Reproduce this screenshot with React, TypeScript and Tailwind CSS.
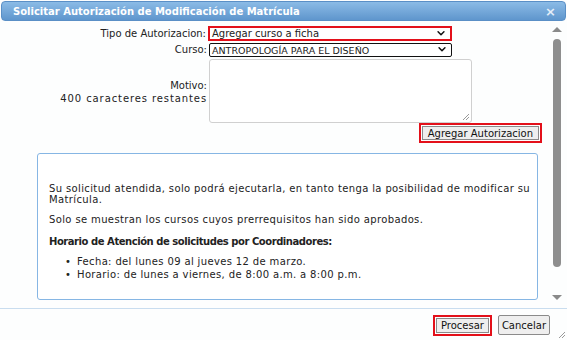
import React from "react";

function Chevron() {
  return (
    <svg viewBox="0 0 9 6" className="h-[5px] w-[8px]" fill="none" stroke="#111" strokeWidth={1.8} strokeLinecap="round" strokeLinejoin="round">
      <path d="M1 1l3.5 3.5L8 1" />
    </svg>
  );
}

function Grip() {
  return (
    <svg viewBox="0 0 8 8" className="h-[8px] w-[8px]" fill="none" stroke="#9a9a9a" strokeWidth={1}>
      <path d="M1 7L7 1M4 7L7 4" />
    </svg>
  );
}

export default function App() {
  return (
    <div className="flex h-[340px] w-[567px] flex-col overflow-hidden bg-[#fdfefe] font-['DejaVu_Sans',sans-serif] text-[10px] text-[#222]">
      {/* title bar */}
      <div className="mx-[1px] mt-[1px] flex h-[20px] shrink-0 items-center justify-between rounded-[4px] border border-[#5a8fc6] bg-gradient-to-b from-[#8bbbe6] to-[#5f96cd] pl-[11px] pr-[9px]">
        <span className="text-[10px] font-bold text-white">Solicitar Autorización de Modificación de Matrícula</span>
        <span className="text-[13px] font-bold leading-none text-[#e4eef8]">×</span>
      </div>

      {/* scrolling body */}
      <div className="flex min-h-0 flex-1">
        <div className="flex-1 pt-[5px]">
          <div className="flex items-center">
            <div className="w-[208px] pr-[2px] text-right">Tipo de Autorizacion:</div>
            <div className="flex h-[15px] w-[244px] items-center justify-between border-2 border-[#e3101a] bg-white pl-[2px] pr-[5px] leading-none">
              <span>Agregar curso a ficha</span>
              <Chevron />
            </div>
          </div>
          <div className="mt-[1px] flex items-center">
            <div className="w-[209px] pr-[2px] text-right">Curso:</div>
            <div className="flex h-[14px] w-[243px] items-center justify-between rounded-[2px] border border-[#111] bg-white pl-[2px] pr-[5px] leading-none">
              <span className="pt-[2px] text-[9.5px]">ANTROPOLOGÍA PARA EL DISEÑO</span>
              <Chevron />
            </div>
          </div>
          <div className="mt-[2px] flex">
            <div className="w-[209px] pr-[2px] pt-[20px] text-right leading-[13px]">
              Motivo:
              <br />
              <span className="tracking-[0.9px]">400 caracteres restantes</span>
            </div>
            <div className="flex h-[64px] w-[263px] items-end justify-end rounded-[3px] border border-[#d0d0d0] bg-white p-[1px]">
              <Grip />
            </div>
          </div>
          <div className="flex justify-end pr-[8px]">
            <div className="border-2 border-[#e3101a] p-[1px]">
              <div className="flex h-[14px] items-center border border-[#8a8a8a] bg-[#eeeeee] px-[5px] text-[#111]">Agregar Autorizacion</div>
            </div>
          </div>
          <div className="ml-[37px] mt-[10px] h-[147px] w-[501px] rounded-[3px] border border-[#86b6e4] bg-white pl-[11px] pt-[29px] leading-[11px]">
            <p className="tracking-[0.37px]">
              Su solicitud atendida, solo podrá ejecutarla, en tanto tenga la posibilidad de modificar su
              <br />
              Matrícula.
            </p>
            <p className="mt-[9px] tracking-[0.37px]">Solo se muestran los cursos cuyos prerrequisitos han sido aprobados.</p>
            <p className="mt-[11px] font-bold tracking-[-0.45px]">Horario de Atención de solicitudes por Coordinadores:</p>
            <ul className="mt-[8px] leading-[13px] tracking-[0.36px]">
              <li className="flex">
                <span className="w-[28px] pl-[16px]">•</span>
                <span>Fecha: del lunes 09 al jueves 12 de marzo.</span>
              </li>
              <li className="flex">
                <span className="w-[28px] pl-[16px]">•</span>
                <span>Horario: de lunes a viernes, de 8:00 a.m. a 8:00 p.m.</span>
              </li>
            </ul>
          </div>
        </div>

        {/* scrollbar */}
        <div className="flex w-[17px] flex-col items-center pr-[3px] pt-[6px]">
          <div className="h-0 w-0 border-x-[5px] border-b-[5px] border-x-transparent border-b-[#8a8a8a]" />
          <div className="mt-[7px] h-[228px] w-[8px] rounded-full bg-[#8e8e8e]" />
          <div className="mt-[28px] h-0 w-0 border-x-[5px] border-t-[5px] border-x-transparent border-t-[#8a8a8a]" />
        </div>
      </div>

      {/* footer */}
      <div className="relative flex h-[32px] shrink-0 items-start justify-end gap-[6px] border-t border-[#c9ddef] pr-[17px] pt-[6px]">
        <div className="border-2 border-[#e3101a] p-[1px]">
          <div className="flex h-[15px] items-center border border-[#8a8a8a] bg-[#eeeeee] px-[4px] text-[#111]">Procesar</div>
        </div>
        <div className="flex h-[20px] items-center rounded-[2px] border border-[#8a8a8a] bg-[#eeeeee] px-[3px] text-[#111]">Cancelar</div>
        <div className="absolute bottom-[1px] right-[1px]">
          <Grip />
        </div>
      </div>
    </div>
  );
}
